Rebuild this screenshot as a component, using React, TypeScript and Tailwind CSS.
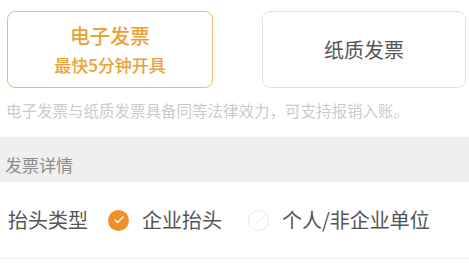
import { Check } from "lucide-react";

const font = { fontFamily: '"Noto Sans CJK SC", "Noto Sans", sans-serif' };

function Radio({ checked, label }: { checked: boolean; label: string }) {
  return (
    <div className="flex items-center">
      {checked ? (
        <span className="flex h-[21px] w-[21px] items-center justify-center rounded-full bg-[#f0902a]">
          <Check className="h-[12px] w-[12px] text-white" strokeWidth={2.5} />
        </span>
      ) : (
        <span className="flex h-[21px] w-[21px] items-center justify-center rounded-full border border-[#e6e6e6]">
          <Check className="h-[11px] w-[11px] text-[#e2e2e2]" strokeWidth={2} />
        </span>
      )}
      <span className="ml-[13px] text-[20px] leading-none text-[#555]">{label}</span>
    </div>
  );
}

export default function App() {
  return (
    <div className="h-[271px] w-[469px] overflow-hidden bg-white" style={font}>
      <div className="flex justify-between pl-[7px] pr-[3px] pt-[11px]">
        <div className="flex h-[77px] w-[206px] flex-col items-center justify-center rounded-[8px] border-[1.5px] border-[#e9bf6f]">
          <div className="text-[20px] font-medium leading-none text-[#eaa236]">电子发票</div>
          <div className="mt-[10px] text-[17px] font-medium leading-none text-[#eaa236]">最快5分钟开具</div>
        </div>
        <div className="flex h-[77px] w-[204px] items-center justify-center rounded-[8px] border border-[#e4e4e4]">
          <span className="text-[20px] leading-none text-[#555]">纸质发票</span>
        </div>
      </div>
      <div className="mt-[12px] pl-[6px] text-[15.5px] leading-[21px] text-[#cbcbcb]">
        电子发票与纸质发票具备同等法律效力，可支持报销入账。
      </div>
      <div className="mt-[16px] h-[45px] bg-[#efefef] pl-[5px] pt-[20px] text-[17px] leading-[16px] text-[#8c8c8c]">
        发票详情
      </div>
      <div className="flex h-[77px] items-center border-b border-[#ececec] pl-[8px]">
        <span className="text-[20px] leading-none text-[#555]">抬头类型</span>
        <div className="ml-[20px]">
          <Radio checked label="企业抬头" />
        </div>
        <div className="ml-[26px]">
          <Radio checked={false} label="个人/非企业单位" />
        </div>
      </div>
    </div>
  );
}
